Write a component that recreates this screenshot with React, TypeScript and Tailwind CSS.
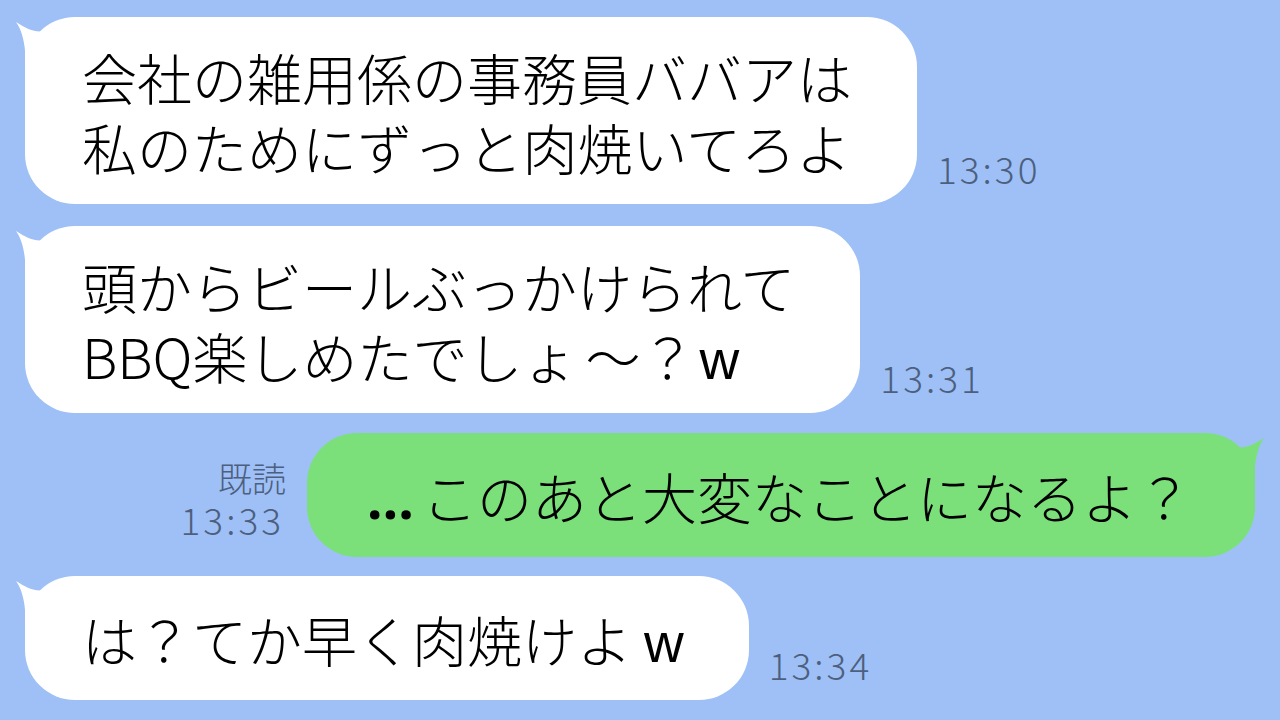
import React from "react";

const JP = "font-['Noto_Sans_CJK_JP','Noto_Sans',sans-serif]";

function TailLeft({ color }: { color: string }) {
  return (
    <svg
      className="absolute left-[-10px] top-0"
      width="72"
      height="62"
      viewBox="0 0 72 62"
    >
      <path
        d="M1,5 C12,12 20,16 30,14 C44,10 54,2 70,0 L70,62 L10,62 L10,34 C9,22 6,12 1,5 Z"
        fill={color}
      />
    </svg>
  );
}

function TailRight({ color }: { color: string }) {
  return (
    <svg
      className="absolute right-[-10px] top-0 -scale-x-100"
      width="72"
      height="62"
      viewBox="0 0 72 62"
    >
      <path
        d="M1,5 C12,12 20,16 30,14 C44,10 54,2 70,0 L70,62 L10,62 L10,34 C9,22 6,12 1,5 Z"
        fill={color}
      />
    </svg>
  );
}

function Time({ children }: { children: React.ReactNode }) {
  return (
    <div
      className={`${JP} text-[37px] leading-[40px] tracking-[3px] text-[#4d5f7e] font-light`}
    >
      {children}
    </div>
  );
}

function W({ pl }: { pl: string }) {
  return (
    <span className={`${pl} font-['Liberation_Sans',sans-serif] leading-[0]`}>w</span>
  );
}

function LeftMsg({
  lines,
  time,
  className,
  pad,
}: {
  lines: React.ReactNode[];
  time: string;
  className?: string;
  pad: string;
}) {
  return (
    <div className={`flex items-end pl-[25px] ${className ?? ""}`}>
      <div className={`relative rounded-[50px] bg-white pl-[57px] pr-[65px] ${pad}`}>
        <TailLeft color="#ffffff" />
        <div
          className={`relative ${JP} font-light text-[55px] leading-[70px] text-black whitespace-nowrap`}
        >
          {lines.map((l, i) => (
            <div key={i} className="h-[70px]">
              {l}
            </div>
          ))}
        </div>
      </div>
      <div className="ml-[20px] mb-[16px]">
        <Time>{time}</Time>
      </div>
    </div>
  );
}

export default function App() {
  return (
    <div className="w-[1280px] h-[720px] overflow-hidden bg-[#9ec0f6] flex flex-col pt-[17px]">
      <LeftMsg
        pad="pt-[24px] pb-[23px]"
        lines={["会社の雑用係の事務員ババアは", "私のためにずっと肉焼いてろよ"]}
        time="13:30"
      />
      <LeftMsg
        pad="pt-[24px] pb-[23px]"
        className="mt-[22px]"
        lines={[
          "頭からビールぶっかけられて",
          <>
            BBQ楽しめたでしょ<span className="inline-block pl-[8px]">～？</span>
            <W pl="pl-[4px]" />
          </>,
        ]}
        time="13:31"
      />
      <div className="mt-[20px] flex items-end justify-end pr-[25px]">
        <div className="mr-[21px] mb-[18px] flex flex-col items-end">
          <div
            className={`${JP} text-[34px] leading-[42px] text-[#4d5f7e] font-light`}
          >
            既読
          </div>
          <div className="pr-[2px]">
            <Time>13:33</Time>
          </div>
        </div>
        <div className="relative rounded-[50px] bg-[#7be07a] pl-[60px] pr-[63px] pt-[27px] pb-[27px]">
          <TailRight color="#7be07a" />
          <div
            className={`relative h-[70px] ${JP} font-light text-[55px] leading-[70px] text-black whitespace-nowrap`}
          >
            <span className="inline-block w-[55px] leading-[0] font-['Noto_Sans',sans-serif] font-bold">
              …
            </span>
            このあと大変なことになるよ？
          </div>
        </div>
      </div>
      <LeftMsg
        pad="pt-[27px] pb-[27px]"
        className="mt-[19px]"
        lines={[
          <>
            は？てか早く肉焼けよ<W pl="pl-[12px]" />
          </>,
        ]}
        time="13:34"
      />
    </div>
  );
}
